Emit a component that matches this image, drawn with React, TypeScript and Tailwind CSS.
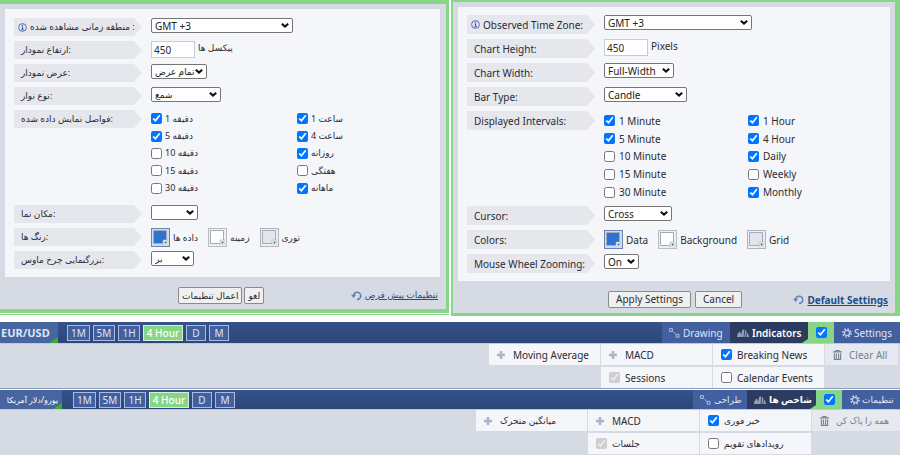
import React from 'react';

type Lang = 'fa' | 'en';

interface Option {
  label: string;
  checked: boolean;
}

interface PanelText {
  lang: Lang;
  zone: string;
  height: string;
  pixels: string;
  width: string;
  fullWidth: string;
  barType: string;
  candle: string;
  intervals: string;
  minutes: Option[];
  periods: Option[];
  cursor: string;
  cross: string;
  colors: string;
  data: string;
  background: string;
  grid: string;
  wheel: string;
  on: string;
  apply: string;
  cancel: string;
  defaults: string;
}

const persian: PanelText = {
  lang: 'fa',
  zone: 'منطقه زمانی مشاهده شده :',
  height: 'ارتفاع نمودار:',
  pixels: 'پیکسل ها',
  width: 'عرض نمودار:',
  fullWidth: 'تمام عرض',
  barType: 'نوع نوار:',
  candle: 'شمع',
  intervals: 'فواصل نمایش داده شده:',
  minutes: [
    { label: '1 دقیقه', checked: true },
    { label: '5 دقیقه', checked: true },
    { label: '10 دقیقه', checked: false },
    { label: '15 دقیقه', checked: false },
    { label: '30 دقیقه', checked: false },
  ],
  periods: [
    { label: '1 ساعت', checked: true },
    { label: '4 ساعت', checked: true },
    { label: 'روزانه', checked: true },
    { label: 'هفتگی', checked: false },
    { label: 'ماهانه', checked: true },
  ],
  cursor: 'مکان نما:',
  cross: '',
  colors: 'رنگ ها:',
  data: 'داده ها',
  background: 'زمینه',
  grid: 'توری',
  wheel: 'بزرگنمایی چرخ ماوس:',
  on: 'بر',
  apply: 'اعمال تنظیمات',
  cancel: 'لغو',
  defaults: 'تنظیمات پیش فرض',
};

const english: PanelText = {
  lang: 'en',
  zone: 'Observed Time Zone:',
  height: 'Chart Height:',
  pixels: 'Pixels',
  width: 'Chart Width:',
  fullWidth: 'Full-Width',
  barType: 'Bar Type:',
  candle: 'Candle',
  intervals: 'Displayed Intervals:',
  minutes: [
    { label: '1 Minute', checked: true },
    { label: '5 Minute', checked: true },
    { label: '10 Minute', checked: false },
    { label: '15 Minute', checked: false },
    { label: '30 Minute', checked: false },
  ],
  periods: [
    { label: '1 Hour', checked: true },
    { label: '4 Hour', checked: true },
    { label: 'Daily', checked: true },
    { label: 'Weekly', checked: false },
    { label: 'Monthly', checked: true },
  ],
  cursor: 'Cursor:',
  cross: 'Cross',
  colors: 'Colors:',
  data: 'Data',
  background: 'Background',
  grid: 'Grid',
  wheel: 'Mouse Wheel Zooming:',
  on: 'On',
  apply: 'Apply Settings',
  cancel: 'Cancel',
  defaults: 'Default Settings',
};

const InfoIcon = () => (
  <svg viewBox="0 0 9 9" className="size-[9px] shrink-0" aria-hidden="true">
    <circle cx="4.5" cy="4.5" r="3.9" fill="#dfe5f9" stroke="#5c6cab" strokeWidth="1" />
    <path d="M4.5 1.8v1.2M3.7 3.9h.9v2.7M3.5 6.7h2.1" stroke="#34448c" strokeWidth="1" fill="none" />
  </svg>
);

const ResetIcon = () => (
  <svg viewBox="0 0 12 12" className="size-[11px] shrink-0" aria-hidden="true">
    <path d="M2.8 6.2A3.9 3.9 0 1 1 6.6 10.2" stroke="#5b84b5" strokeWidth="1.7" fill="none" />
    <path d="M0 5.2h5.6L2.8 8.8z" fill="#5b84b5" />
  </svg>
);

const PlusIcon = () => (
  <svg viewBox="0 0 8 8" className="size-2" aria-hidden="true">
    <path d="M4 0v8M0 4h8" stroke="#a9b7cb" strokeWidth="2.6" />
  </svg>
);

const TrashIcon = () => (
  <svg viewBox="0 0 9 10" className="h-[10px] w-[9px] shrink-0" aria-hidden="true">
    <path d="M0 1.9h9M3 1.5V.5h3v1" stroke="#76818f" strokeWidth="1.1" fill="none" />
    <path d="M1.4 3.2v6.2h6.2V3.2M3.4 3.4v5.2M5.6 3.4v5.2" stroke="#76818f" strokeWidth="1.1" fill="none" />
  </svg>
);

const DrawingIcon = () => (
  <svg viewBox="0 0 11 10" className="h-[10px] w-[11px] shrink-0" aria-hidden="true">
    <path d="M.6.6h2.8v2.8H.6zM7.2 6.4H10v2.8H7.2z" stroke="#b9c6e2" strokeWidth="0.9" fill="none" />
    <path d="M3.6 3.6l3.6 2.8" stroke="#b9c6e2" strokeWidth="0.9" strokeDasharray="1.2 0.6" />
  </svg>
);

const IndicatorIcon = () => (
  <svg viewBox="0 0 12 8" className="h-2 w-3 shrink-0" aria-hidden="true">
    <path d="M0 8C0 5.6 1 3.6 2.8 2.4l1.4 3.2L5.2.8 7.4.4 6.6 8z" fill="#959eb2" />
    <path d="M8.2 1C9.2 1.6 9.6 2.4 9.4 3.4L8.6 8H7.4zM10 3.4C11.2 4.6 11.8 6 12 8H9.4z" fill="#959eb2" />
  </svg>
);

const GearIcon = () => (
  <svg viewBox="0 0 10 10" className="size-[10px] shrink-0" aria-hidden="true">
    <circle cx="5" cy="5" r="4" stroke="#c5d0e8" strokeWidth="1.6" strokeDasharray="1.57 1.57" fill="none" />
    <circle cx="5" cy="5" r="2.6" stroke="#c5d0e8" strokeWidth="1.2" fill="none" />
  </svg>
);

interface SelectProps {
  id: string;
  value: string;
  className: string;
}

const Select: React.FC<SelectProps> = ({ id, value, className }) => (
  <div className={`relative ${className}`}>
    <select
      id={id}
      defaultValue={value}
      className="block h-[15px] w-full appearance-none rounded-[2px] border border-[#767676] bg-white pl-[3px] text-[#222]"
    >
      <option value={value}>{value}</option>
    </select>
    <svg viewBox="0 0 8 5" className="pointer-events-none absolute top-[5px] right-1 h-[5px] w-2" aria-hidden="true">
      <path d="M.8.8L4 3.6 7.2.8" stroke="#111" strokeWidth="2.1" fill="none" />
    </svg>
  </div>
);

interface RowProps {
  label: string;
  htmlFor?: string;
  info?: boolean;
  lang: Lang;
  tall?: boolean;
  children: React.ReactNode;
}

const Row: React.FC<RowProps> = ({ label, htmlFor, info, lang, tall, children }) => {
  const Tag = htmlFor ? 'label' : 'span';
  const rowHeight = tall ? 'h-[90px]' : lang === 'fa' ? 'h-[18px]' : 'h-[19px]';
  return (
    <div className={`flex gap-[9px] ${rowHeight}`}>
      <Tag
        htmlFor={htmlFor}
        className={`flex w-32 shrink-0 items-center gap-[3px] bg-[#e5e7ed] whitespace-nowrap [clip-path:polygon(0_0,120px_0,100%_50%,120px_100%,0_100%)] ${
          lang === 'fa' ? 'h-[18px]' : 'h-[19px]'
        } ${info ? 'pl-1' : 'pl-[7px]'}`}
      >
        {info && <InfoIcon />}
        {label}
      </Tag>
      {children}
    </div>
  );
};

interface CheckListProps {
  options: Option[];
  lang: Lang;
}

const CheckList: React.FC<CheckListProps> = ({ options, lang }) => (
  <div className="grid grid-rows-5">
    {options.map((option) => (
      <label
        key={option.label}
        className={`flex items-center whitespace-nowrap ${lang === 'fa' ? 'gap-[3px]' : 'gap-1'}`}
      >
        <input type="checkbox" defaultChecked={option.checked} className="size-[11px] accent-[#0075ff]" />
        {option.label}
      </label>
    ))}
  </div>
);

interface SwatchProps {
  label: string;
  tone: string;
  frame: string;
}

const Swatch: React.FC<SwatchProps> = ({ label, tone, frame }) => (
  <button type="button" className="flex items-center gap-[3px] whitespace-nowrap">
    <span className={`flex size-[19px] items-center justify-center border ${frame}`}>
      <svg viewBox="0 0 15 15" className={`size-[15px] ${tone}`} aria-hidden="true">
        <path d="M.5.5h13v13H.5z" fill="currentColor" stroke="#a3abb9" />
        <path d="M10 15v-5h5v5z" fill="#eceef2" stroke="#b5b9c2" strokeWidth="0.7" />
        <path d="M11.2 11.8h2.8l-1.4 2z" fill="#555" />
      </svg>
    </span>
    {label}
  </button>
);

const SettingsPanel: React.FC<{ text: PanelText }> = ({ text }) => {
  const { lang } = text;
  const fa = lang === 'fa';
  const id = (name: string) => `${lang}-${name}`;

  return (
    <section
      lang={lang}
      className={`flex min-w-0 flex-col border-[#87d587] bg-[#d6dae3] ${
        fa
          ? 'mb-[3px] border-t-4 border-r-[3px] border-b-4 text-[9px] shadow-[0_1px_0_#ffffff,0_2px_0_#8fd094]'
          : 'border-t-2 border-r-[5px] border-b-[3px] border-l-2'
      }`}
    >
      <div
        className={`flex flex-col gap-[5px] bg-[#f5f6fa] px-[9px] pb-2 ${
          fa ? 'mt-[5px] mr-[6px] ml-[5px] pt-[9px]' : 'mx-[5px] mt-[5px] pt-2'
        }`}
      >
        <Row lang={lang} label={text.zone} htmlFor={id('zone')} info>
          <Select id={id('zone')} value="GMT +3" className={`text-[10px] ${fa ? 'w-[142px]' : 'w-[148px]'}`} />
        </Row>
        <Row lang={lang} label={text.height} htmlFor={id('height')}>
          <input
            id={id('height')}
            type="text"
            defaultValue="450"
            className="h-[17px] w-11 border border-[#c3cbe0] bg-white px-[2px] text-[10px]"
          />
          <span className="-ml-[6px] leading-[14px]">{text.pixels}</span>
        </Row>
        <Row lang={lang} label={text.width} htmlFor={id('width')}>
          <Select id={id('width')} value={text.fullWidth} className={fa ? 'w-14' : 'w-[70px]'} />
        </Row>
        <Row lang={lang} label={text.barType} htmlFor={id('bar')}>
          <Select id={id('bar')} value={text.candle} className={fa ? 'w-[70px]' : 'w-[83px]'} />
        </Row>
        <Row lang={lang} label={text.intervals} tall>
          <div
            className={`grid ${fa ? 'h-[87px] grid-cols-[146px_auto]' : 'mt-[1px] h-[89px] grid-cols-[144px_auto]'}`}
          >
            <CheckList options={text.minutes} lang={lang} />
            <CheckList options={text.periods} lang={lang} />
          </div>
        </Row>
        <Row lang={lang} label={text.cursor} htmlFor={id('cursor')}>
          <Select id={id('cursor')} value={text.cross} className={fa ? 'w-[47px]' : 'w-[68px]'} />
        </Row>
        <Row lang={lang} label={text.colors}>
          <div className="flex items-start gap-[10px]">
            <Swatch label={text.data} tone="text-[#2f74cc]" frame="border-[#6685b3] bg-[#cfdcf0]" />
            <Swatch label={text.background} tone="text-white" frame="border-[#b9bcc3] bg-[#eeeff2]" />
            <Swatch label={text.grid} tone="text-[#e2e5ee]" frame="border-[#b0b3ba] bg-[#eeeff2]" />
          </div>
        </Row>
        <Row lang={lang} label={text.wheel} htmlFor={id('wheel')}>
          <Select id={id('wheel')} value={text.on} className={fa ? 'w-[43px]' : 'w-[35px]'} />
        </Row>
      </div>
      <div
        className={`flex h-8 items-center justify-between whitespace-nowrap ${
          fa ? 'pt-1 pr-2 pl-[178px]' : 'pt-[5px] pr-[7px] pl-[155px]'
        }`}
      >
        <div className={`flex ${fa ? 'gap-[2px]' : 'gap-1'}`}>
          {[text.apply, text.cancel].map((label) => (
            <button
              key={label}
              type="button"
              className={`h-[17px] rounded-[2px] border border-[#8a8a8a] bg-[#f0f0f0] leading-[15px] ${
                fa ? 'px-[3px]' : 'px-[7px]'
              }`}
            >
              {label}
            </button>
          ))}
        </div>
        <a href="#defaults" className={`flex items-center gap-[3px] text-[#1d4f8c] ${fa ? '' : 'font-bold'}`}>
          <ResetIcon />
          <span className="underline">{text.defaults}</span>
        </a>
      </div>
    </section>
  );
};

interface ToolbarText {
  lang: Lang;
  pair: string;
  drawing: string;
  indicators: string;
  settings: string;
  average: string;
  news: string;
  sessions: string;
  events: string;
  clear: string;
}

const englishBar: ToolbarText = {
  lang: 'en',
  pair: 'EUR/USD',
  drawing: 'Drawing',
  indicators: 'Indicators',
  settings: 'Settings',
  average: 'Moving Average',
  news: 'Breaking News',
  sessions: 'Sessions',
  events: 'Calendar Events',
  clear: 'Clear All',
};

const persianBar: ToolbarText = {
  lang: 'fa',
  pair: 'یورو/دلار آمریکا',
  drawing: 'طراحی',
  indicators: 'شاخص ها',
  settings: 'تنظیمات',
  average: 'میانگین متحرک',
  news: 'خبر فوری',
  sessions: 'جلسات',
  events: 'رویدادهای تقویم',
  clear: 'همه را پاک کن',
};

const ranges = [
  { label: '1M', width: 'w-[23px]' },
  { label: '5M', width: 'w-[22px]' },
  { label: '1H', width: 'w-[22px]' },
  { label: '4 Hour', width: 'w-10' },
  { label: 'D', width: 'w-5' },
  { label: 'M', width: 'w-5' },
];

const cell = 'flex items-center gap-[5px] bg-[#f5f6fa] pl-2 whitespace-nowrap';

const ChartToolbar: React.FC<{ text: ToolbarText }> = ({ text }) => {
  const fa = text.lang === 'fa';

  return (
    <section lang={text.lang} className={fa ? 'text-[9px]' : ''}>
      <div
        className={`flex items-stretch bg-linear-to-b from-[#35528b] to-[#2c4677] text-[#dfe6f5] ${
          fa ? 'h-[19px]' : 'h-[21px]'
        }`}
      >
        <button
          type="button"
          className={`relative flex items-center bg-[#4765a1] whitespace-nowrap ${
            fa ? 'w-[62px] justify-end pr-1 text-[8px] text-white' : 'w-[58px] pl-[1px] text-[11px] font-bold'
          }`}
        >
          {text.pair}
          <span className="absolute right-0 bottom-0 h-[6px] w-[9px] bg-[#34b133] [clip-path:polygon(100%_0,100%_100%,0_100%)]" />
        </button>
        <div className={`flex items-center gap-[3px] text-[10px] ${fa ? 'ml-[11px]' : 'ml-[9px]'}`}>
          {ranges.map((range) => (
            <button
              key={range.label}
              type="button"
              className={`h-4 border leading-[14px] whitespace-nowrap ${range.width} ${
                range.label === '4 Hour'
                  ? 'border-[#d5efd9] bg-[#87d587] font-medium text-white'
                  : 'border-[#a9bbdf] bg-[#4260a0]'
              }`}
            >
              {range.label}
            </button>
          ))}
        </div>
        <div className="ml-auto flex">
          <button
            type="button"
            className={`flex items-center gap-[3px] bg-[#4260a0] pl-[7px] ${fa ? 'w-[54px]' : 'w-[68px]'}`}
          >
            <DrawingIcon />
            {text.drawing}
          </button>
          <button
            type="button"
            className={`relative flex items-center gap-[3px] bg-[#2c3b60] pl-[7px] font-semibold whitespace-nowrap text-white ${
              fa ? 'w-[69px]' : 'w-[78px]'
            }`}
          >
            <IndicatorIcon />
            {text.indicators}
            <span className="absolute right-0 bottom-0 h-1 w-[6px] bg-[#87d587] [clip-path:polygon(100%_0,100%_100%,0_100%)]" />
          </button>
          <span className="flex w-[26px] items-center justify-center bg-[#87d587]">
            <input
              type="checkbox"
              defaultChecked
              aria-label={text.settings}
              className="size-[11px] accent-[#0075ff]"
            />
          </span>
          <button
            type="button"
            className={`flex items-center gap-[2px] bg-[#4260a0] pl-2 whitespace-nowrap ${fa ? 'w-[58px]' : 'w-[66px]'}`}
          >
            <GearIcon />
            {text.settings}
          </button>
        </div>
      </div>
      <div
        className={`flex items-start justify-end gap-[1px] border-t border-[#c2c8d8] bg-[#d6dae3] ${
          fa ? 'pb-[1px]' : 'border-b border-b-[#8d9cbd] pr-[2px]'
        }`}
      >
        <div className="grid auto-rows-[21px] grid-cols-[repeat(3,111px)] gap-x-[1px] gap-y-[2px]">
          <button type="button" className={cell}>
            <span className="w-[11px]">
              <PlusIcon />
            </span>
            {text.average}
          </button>
          <button type="button" className={`text-[10px] ${cell}`}>
            <span className="w-[11px]">
              <PlusIcon />
            </span>
            MACD
          </button>
          <label className={cell}>
            <input type="checkbox" defaultChecked className="size-[11px] accent-[#0075ff]" />
            {text.news}
          </label>
          <label className={`col-start-2 ${cell}`}>
            <input type="checkbox" defaultChecked disabled className="size-[11px]" />
            {text.sessions}
          </label>
          <label className={cell}>
            <input type="checkbox" className="size-[11px]" />
            {text.events}
          </label>
        </div>
        <button
          type="button"
          className={`flex h-[21px] items-center gap-[7px] bg-[#e6e9ef] pl-2 whitespace-nowrap text-[#76818f] ${
            fa ? 'w-[88px]' : 'w-[73px]'
          }`}
        >
          <TrashIcon />
          {text.clear}
        </button>
      </div>
    </section>
  );
};

export default function App() {
  return (
    <main className="min-h-screen bg-white font-['Noto_Sans','DejaVu_Sans',sans-serif] text-[10px] leading-[14px] text-[#2b2b33]">
      <div className="grid grid-cols-2 gap-[2px]">
        <SettingsPanel text={persian} />
        <SettingsPanel text={english} />
      </div>
      <div className="mt-[6px] flex flex-col gap-[1px]">
        <ChartToolbar text={englishBar} />
        <ChartToolbar text={persianBar} />
      </div>
    </main>
  );
}
